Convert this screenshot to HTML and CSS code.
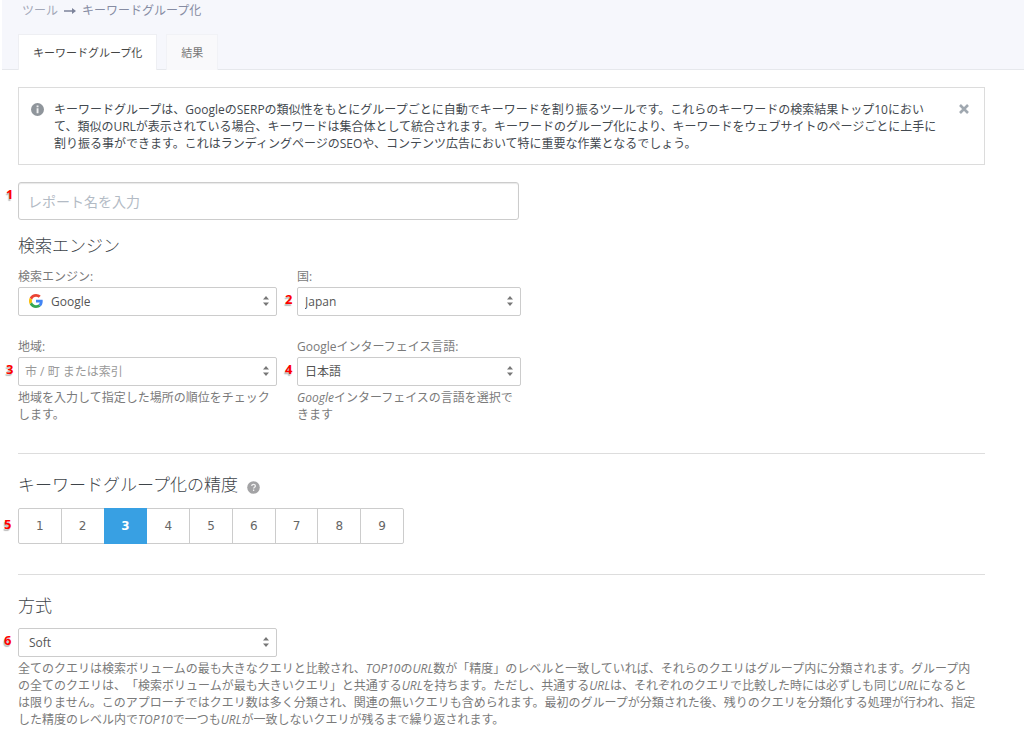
FILE: index.html
```html
<!DOCTYPE html>
<html lang="ja">
<head>
<meta charset="utf-8">
<title>キーワードグループ化</title>
<link rel="stylesheet" href="styles.css">
</head>
<body>
<header class="header">
  <nav class="breadcrumb">
    <a href="#">ツール</a>
    <svg class="breadcrumb-arrow" viewBox="0 0 12 8" aria-hidden="true"><path d="M0 3.3h8V1l4 3-4 3V4.7H0z"/></svg>
    <span>キーワードグループ化</span>
  </nav>
  <nav class="tabs">
    <a class="tab tab-active" href="#">キーワードグループ化</a>
    <a class="tab" href="#">結果</a>
  </nav>
</header>
<main class="content">
  <section class="notice">
    <svg class="notice-icon" viewBox="0 0 13 13" aria-hidden="true"><circle cx="6.5" cy="6.5" r="6.5" fill="#8f959b"/><path d="M5.6 2.5h1.9v1.8H5.600zM5.600 5.300h1.900v5H5.600z" fill="#fff" fill-opacity=".85"/></svg>
    <p class="notice-text">キーワードグループは、GoogleのSERPの類似性をもとにグループごとに自動でキーワードを割り振るツールです。これらのキーワードの検索結果トップ10におい<br>て、類似のURLが表示されている場合、キーワードは集合体として統合されます。キーワードのグループ化により、キーワードをウェブサイトのページごとに上手に<br>割り振る事ができます。これはランディングページのSEOや、コンテンツ広告において特に重要な作業となるでしょう。</p>
    <button class="notice-close" type="button" aria-label="閉じる"><svg viewBox="0 0 10 10"><path d="M1 1l8 8M9 1l-8 8" stroke="#a0a8b0" stroke-width="2.600"/></svg></button>
  </section>

  <div class="marked name-row">
    <span class="mark">1</span>
    <input class="name-input" type="text" placeholder="レポート名を入力" aria-label="レポート名を入力">
  </div>

  <section>
    <h2 class="title">検索エンジン</h2>
    <div class="fields">
      <div class="field">
        <label for="engine">検索エンジン:</label>
        <div class="marked">
          <svg class="google" viewBox="0 0 48 48" aria-hidden="true"><path fill="#ea4335" d="M24 9.500c3.540 0 6.710 1.220 9.210 3.600l6.850-6.850C35.900 2.380 30.470 0 24 0 14.620 0 6.510 5.380 2.560 13.220l7.980 6.190C12.430 13.720 17.740 9.500 24 9.500z"/><path fill="#4285f4" d="M46.980 24.550c0-1.570-.15-3.090-.38-4.550H24v9.020h12.940c-.58 2.960-2.260 5.480-4.780 7.180l7.730 6c4.510-4.180 7.090-10.360 7.090-17.650z"/><path fill="#fbbc05" d="M10.530 28.590c-.48-1.450-.76-2.990-.76-4.590s.27-3.140.76-4.590l-7.980-6.190C.92 16.460 0 20.120 0 24c0 3.880.92 7.540 2.560 10.780l7.970-6.190z"/><path fill="#34a853" d="M24 48c6.480 0 11.930-2.130 15.890-5.810l-7.730-6c-2.150 1.450-4.920 2.300-8.160 2.300-6.260 0-11.570-4.220-13.470-9.910l-7.980 6.190C6.510 42.620 14.620 48 24 48z"/></svg>
          <select class="select select-logo" id="engine"><option>Google</option></select>
          <svg class="caret" viewBox="0 0 6 10" aria-hidden="true"><path d="M0 3.500L3 0l3 3.500zM0 6.500L3 10l3-3.500z"/></svg>
        </div>
      </div>
      <div class="field">
        <label for="country">国:</label>
        <div class="marked">
          <span class="mark">2</span>
          <select class="select" id="country"><option>Japan</option></select>
          <svg class="caret" viewBox="0 0 6 10" aria-hidden="true"><path d="M0 3.500L3 0l3 3.500zM0 6.500L3 10l3-3.500z"/></svg>
        </div>
      </div>
      <div class="field">
        <label for="region">地域:</label>
        <div class="marked">
          <span class="mark">3</span>
          <select class="select select-empty" id="region"><option>市 / 町 または索引</option></select>
          <svg class="caret" viewBox="0 0 6 10" aria-hidden="true"><path d="M0 3.500L3 0l3 3.500zM0 6.500L3 10l3-3.500z"/></svg>
        </div>
        <p class="help">地域を入力して指定した場所の順位をチェック<br>します。</p>
      </div>
      <div class="field">
        <label for="language">Googleインターフェイス言語:</label>
        <div class="marked">
          <span class="mark">4</span>
          <select class="select" id="language"><option>日本語</option></select>
          <svg class="caret" viewBox="0 0 6 10" aria-hidden="true"><path d="M0 3.500L3 0l3 3.500zM0 6.500L3 10l3-3.500z"/></svg>
        </div>
        <p class="help"><em>Google</em>インターフェイスの言語を選択で<br>きます</p>
      </div>
    </div>
  </section>

  <section class="section">
    <h2 class="title">キーワードグループ化の精度
      <svg class="question" viewBox="0 0 13 13" role="img" aria-label="ヘルプ"><circle cx="6.500" cy="6.500" r="6.300" fill="#a3a3a5"/><path d="M4.700 5.100c0-2.500 3.700-2.300 3.700-.2 0 1.300-1.800 1.300-1.800 2.700M6.600 8.600v1.500" fill="none" stroke="#fff" stroke-opacity=".85" stroke-width="1.300"/></svg>
    </h2>
    <div class="marked levels">
      <span class="mark">5</span>
      <button class="level" type="button">1</button>
      <button class="level" type="button">2</button>
      <button class="level level-active" type="button" aria-pressed="true">3</button>
      <button class="level" type="button">4</button>
      <button class="level" type="button">5</button>
      <button class="level" type="button">6</button>
      <button class="level" type="button">7</button>
      <button class="level" type="button">8</button>
      <button class="level" type="button">9</button>
    </div>
  </section>

  <section class="section">
    <h2 class="title">方式</h2>
    <div class="marked method">
      <span class="mark">6</span>
      <select class="select select-method" aria-label="方式"><option>Soft</option></select>
      <svg class="caret" viewBox="0 0 6 10" aria-hidden="true"><path d="M0 3.500L3 0l3 3.500zM0 6.500L3 10l3-3.500z"/></svg>
    </div>
    <p class="help">全てのクエリは検索ボリュームの最も大きなクエリと比較され、<em>TOP10</em>の<em>URL</em>数が「精度」のレベルと一致していれば、それらのクエリはグループ内に分類されます。グループ内<br>の全てのクエリは、「検索ボリュームが最も大きいクエリ」と共通する<em>URL</em>を持ちます。ただし、共通する<em>URL</em>は、それぞれのクエリで比較した時には必ずしも同じ<em>URL</em>になると<br>は限りません。このアプローチではクエリ数は多く分類され、関連の無いクエリも含められます。最初のグループが分類された後、残りのクエリを分類化する処理が行われ、指定<br>した精度のレベル内で<em>TOP10</em>で一つも<em>URL</em>が一致しないクエリが残るまで繰り返されます。</p>
  </section>
</main>
</body>
</html>
```

FILE: styles.css
```css
* {
  box-sizing: border-box;
}

body {
  margin: 0;
  background: #fff;
  color: #7a7a7a;
  font-family: "Open Sans", "Noto Sans CJK JP", sans-serif;
  font-size: 12px;
  line-height: 16px;
  text-spacing-trim: space-all;
}

p,
h2 {
  margin: 0;
}

.header {
  margin-left: 2px;
  padding: 3px 16px 0;
  background: #f6f7fc;
  border-bottom: 1px solid #e6e8ec;
}

.breadcrumb {
  display: flex;
  align-items: center;
  gap: 6px;
  padding-left: 4px;
  color: #868ca3;
}

.breadcrumb a {
  color: #a3a8b8;
  text-decoration: none;
}

.breadcrumb-arrow {
  width: 12px;
  height: 8px;
  fill: #7d849b;
}

.tabs {
  display: flex;
  gap: 9px;
  margin: 15px 0 -1px;
}

.tab {
  height: 36px;
  padding: 0 14px;
  background: #f9f9fb;
  border: 1px solid #f1f2f6;
  border-bottom: 0;
  color: #777;
  font-size: 11px;
  line-height: 35px;
  text-decoration: none;
}

.tab-active {
  background: #fff;
  border-color: #eeeff3;
  color: #444;
}

.content {
  padding: 17px 39px 12px 18px;
}

.notice {
  display: flex;
  align-items: flex-start;
  padding: 13px 15px 12px 12px;
  border: 1px solid #dcdcdc;
  color: #43494f;
}

.notice-icon {
  flex: none;
  width: 13px;
  height: 13px;
  margin: 2px 10px 0 0;
}

.notice-text {
  flex: 1;
  line-height: 17px;
}

.notice-close {
  flex: none;
  width: 10px;
  height: 10px;
  margin-top: 3px;
  padding: 0;
  border: 0;
  background: none;
}

.notice-close svg {
  display: block;
}

.marked {
  position: relative;
}

.mark {
  position: absolute;
  top: 4px;
  left: -12px;
  color: #f00;
  font-size: 13px;
  font-weight: 700;
  line-height: 16px;
  text-shadow: -1px 2px 1px #bbb;
}

.name-row {
  max-width: 501px;
  margin: 17px 0 16px;
}

.name-input {
  display: block;
  width: 100%;
  height: 38px;
  padding: 0 9px;
  border: 1px solid #ccc;
  border-radius: 3px;
  box-shadow: inset 0 1px 1px #e8e8e8;
  color: #444;
  font: inherit;
  font-size: 14px;
}

.name-input::placeholder {
  color: #b3bbc5;
}

.title {
  display: flex;
  align-items: center;
  color: #3e4449;
  font-size: 17px;
  font-weight: 300;
  line-height: 20px;
}

.fields {
  display: grid;
  grid-template-columns: 259px 224px;
  gap: 23px 20px;
  margin-top: 13px;
}

.field label {
  display: block;
  margin-bottom: 2px;
}

.select {
  display: block;
  width: 100%;
  height: 29px;
  padding: 0 7px;
  appearance: none;
  background: #fff;
  border: 1px solid #ccc;
  border-radius: 2px;
  color: #555;
  font: inherit;
}

.select-logo {
  padding-left: 32px;
}

.select-empty {
  padding-left: 6px;
  color: #999;
}

.select-method {
  padding-left: 10px;
}

.google {
  position: absolute;
  top: 7px;
  left: 11px;
  width: 14px;
  height: 14px;
}

.caret {
  position: absolute;
  top: 9px;
  right: 8px;
  width: 6px;
  height: 10px;
  fill: #777;
  pointer-events: none;
}

.help {
  margin-top: 3px;
  line-height: 17px;
}

.section {
  margin-top: 30px;
  padding-top: 21px;
  border-top: 1px solid #ddd;
}

.question {
  width: 13px;
  height: 13px;
  margin: 5px 0 0 9px;
}

.levels {
  display: flex;
  max-width: 386px;
  margin-top: 13px;
}

.levels .mark,
.method .mark {
  left: -14px;
}

.levels .mark {
  top: 8px;
}

.level {
  flex: 1;
  height: 36px;
  padding: 0;
  background: #fff;
  border: 1px solid #ccc;
  color: #666;
  font-family: "DejaVu Sans", sans-serif;
  font-size: 12px;
}

.level + .level {
  margin-left: -1px;
}

.level:first-of-type {
  border-radius: 2px 0 0 2px;
}

.level:last-of-type {
  border-radius: 0 2px 2px 0;
}

.level-active {
  z-index: 1;
  background: #38a0e3;
  border-color: #38a0e3;
  color: #fff;
  font-weight: 700;
}

.method {
  max-width: 259px;
  margin-top: 12px;
}
```
